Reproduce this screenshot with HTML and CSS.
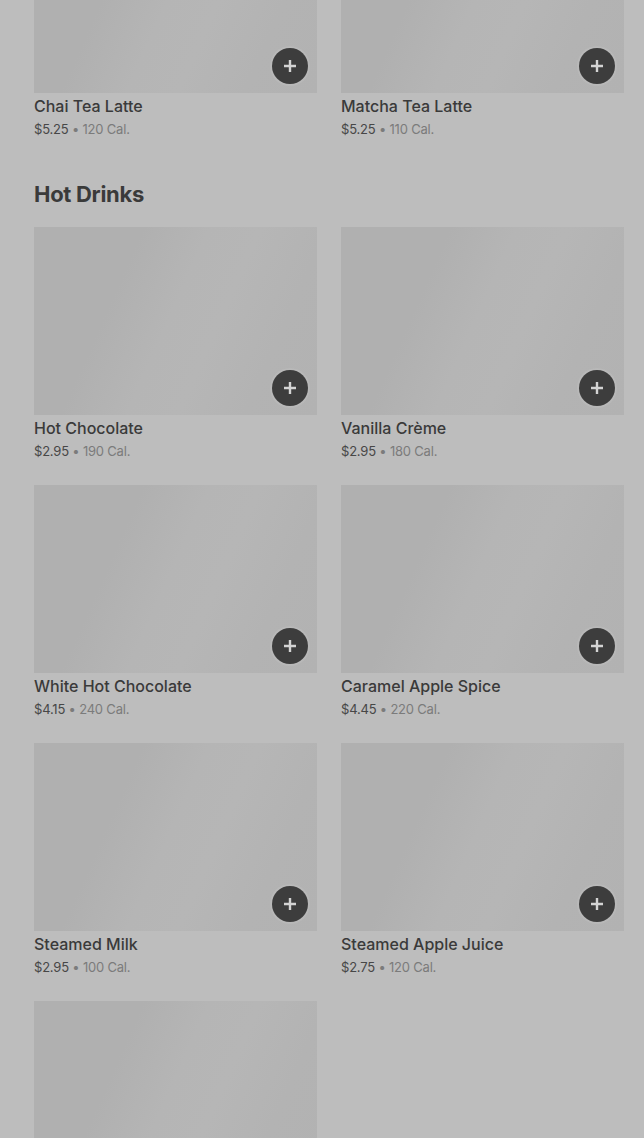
FILE: index.html
```html
<!DOCTYPE html>
<html lang="en">
<head>
<meta charset="UTF-8">
<meta name="viewport" content="width=device-width, initial-scale=1.0">
<title>Menu</title>
<link rel="stylesheet" href="styles.css">
</head>
<body>
  <div class="menu">
    <section class="category first">
      <div class="grid">
        <div class="item">
          <div class="thumb"><button class="add" aria-label="Add"><svg width="12" height="12" viewBox="0 0 12 12"><path d="M6 0v12M0 6h12" stroke="currentColor" stroke-width="2.4"/></svg></button></div>
          <div class="name">Chai Tea Latte</div>
          <div class="meta"><span class="price">$5.25</span> • 120 Cal.</div>
        </div>
        <div class="item">
          <div class="thumb"><button class="add" aria-label="Add"><svg width="12" height="12" viewBox="0 0 12 12"><path d="M6 0v12M0 6h12" stroke="currentColor" stroke-width="2.4"/></svg></button></div>
          <div class="name">Matcha Tea Latte</div>
          <div class="meta"><span class="price">$5.25</span> • 110 Cal.</div>
        </div>
      </div>
    </section>

    <section class="category">
      <h2>Hot Drinks</h2>
      <div class="grid">
        <div class="item">
          <div class="thumb"><button class="add" aria-label="Add"><svg width="12" height="12" viewBox="0 0 12 12"><path d="M6 0v12M0 6h12" stroke="currentColor" stroke-width="2.4"/></svg></button></div>
          <div class="name">Hot Chocolate</div>
          <div class="meta"><span class="price">$2.95</span> • 190 Cal.</div>
        </div>
        <div class="item">
          <div class="thumb"><button class="add" aria-label="Add"><svg width="12" height="12" viewBox="0 0 12 12"><path d="M6 0v12M0 6h12" stroke="currentColor" stroke-width="2.4"/></svg></button></div>
          <div class="name">Vanilla Crème</div>
          <div class="meta"><span class="price">$2.95</span> • 180 Cal.</div>
        </div>
        <div class="item">
          <div class="thumb"><button class="add" aria-label="Add"><svg width="12" height="12" viewBox="0 0 12 12"><path d="M6 0v12M0 6h12" stroke="currentColor" stroke-width="2.4"/></svg></button></div>
          <div class="name">White Hot Chocolate</div>
          <div class="meta"><span class="price">$4.15</span> • 240 Cal.</div>
        </div>
        <div class="item">
          <div class="thumb"><button class="add" aria-label="Add"><svg width="12" height="12" viewBox="0 0 12 12"><path d="M6 0v12M0 6h12" stroke="currentColor" stroke-width="2.4"/></svg></button></div>
          <div class="name">Caramel Apple Spice</div>
          <div class="meta"><span class="price">$4.45</span> • 220 Cal.</div>
        </div>
        <div class="item">
          <div class="thumb"><button class="add" aria-label="Add"><svg width="12" height="12" viewBox="0 0 12 12"><path d="M6 0v12M0 6h12" stroke="currentColor" stroke-width="2.4"/></svg></button></div>
          <div class="name">Steamed Milk</div>
          <div class="meta"><span class="price">$2.95</span> • 100 Cal.</div>
        </div>
        <div class="item">
          <div class="thumb"><button class="add" aria-label="Add"><svg width="12" height="12" viewBox="0 0 12 12"><path d="M6 0v12M0 6h12" stroke="currentColor" stroke-width="2.4"/></svg></button></div>
          <div class="name">Steamed Apple Juice</div>
          <div class="meta"><span class="price">$2.75</span> • 120 Cal.</div>
        </div>
        <div class="item">
          <div class="thumb"></div>
        </div>
      </div>
    </section>
  </div>
</body>
</html>
```

FILE: styles.css
```css
html, body {
  height: 100%;
  overflow: hidden;
}
body {
  margin: 0;
  background-color: #bdbdbd;
  font-family: Inter, "Noto Sans", Arial, sans-serif;
  color: #3b3b3b;
}
.menu {
  padding: 0 20px 0 34px;
}
.category.first {
  margin-top: -95px;
}
.category h2 {
  margin: 39px 0 17px;
  font-size: 22px;
  line-height: 32px;
  font-weight: 700;
  letter-spacing: -0.3px;
  color: #3a3a3a;
}
.grid {
  display: grid;
  grid-template-columns: 1fr 1fr;
  column-gap: 24px;
  row-gap: 24px;
}
.thumb {
  position: relative;
  height: 188px;
  background: linear-gradient(114deg, #b0b0b0 0%, #b0b0b0 30%, #b5b5b5 48%, #b6b6b6 62%, #b3b3b3 80%, #b2b2b2 100%);
}
.add {
  position: absolute;
  right: 9px;
  bottom: 9px;
  width: 36px;
  height: 36px;
  border: none;
  border-radius: 50%;
  background-color: #3d3d3d;
  color: #d4d4d4;
  padding: 0;
  display: flex;
  align-items: center;
  justify-content: center;
  box-shadow: 0 0 0 2px rgba(255, 255, 255, 0.08);
}
.name {
  margin-top: 3px;
  font-size: 16px;
  line-height: 20px;
  font-weight: 500;
  color: #3a3a3a;
}
.meta {
  margin-top: 3px;
  font-size: 13px;
  line-height: 20px;
  letter-spacing: -0.2px;
  color: #7b7b7b;
}
.meta .price {
  color: #474747;
}
```
